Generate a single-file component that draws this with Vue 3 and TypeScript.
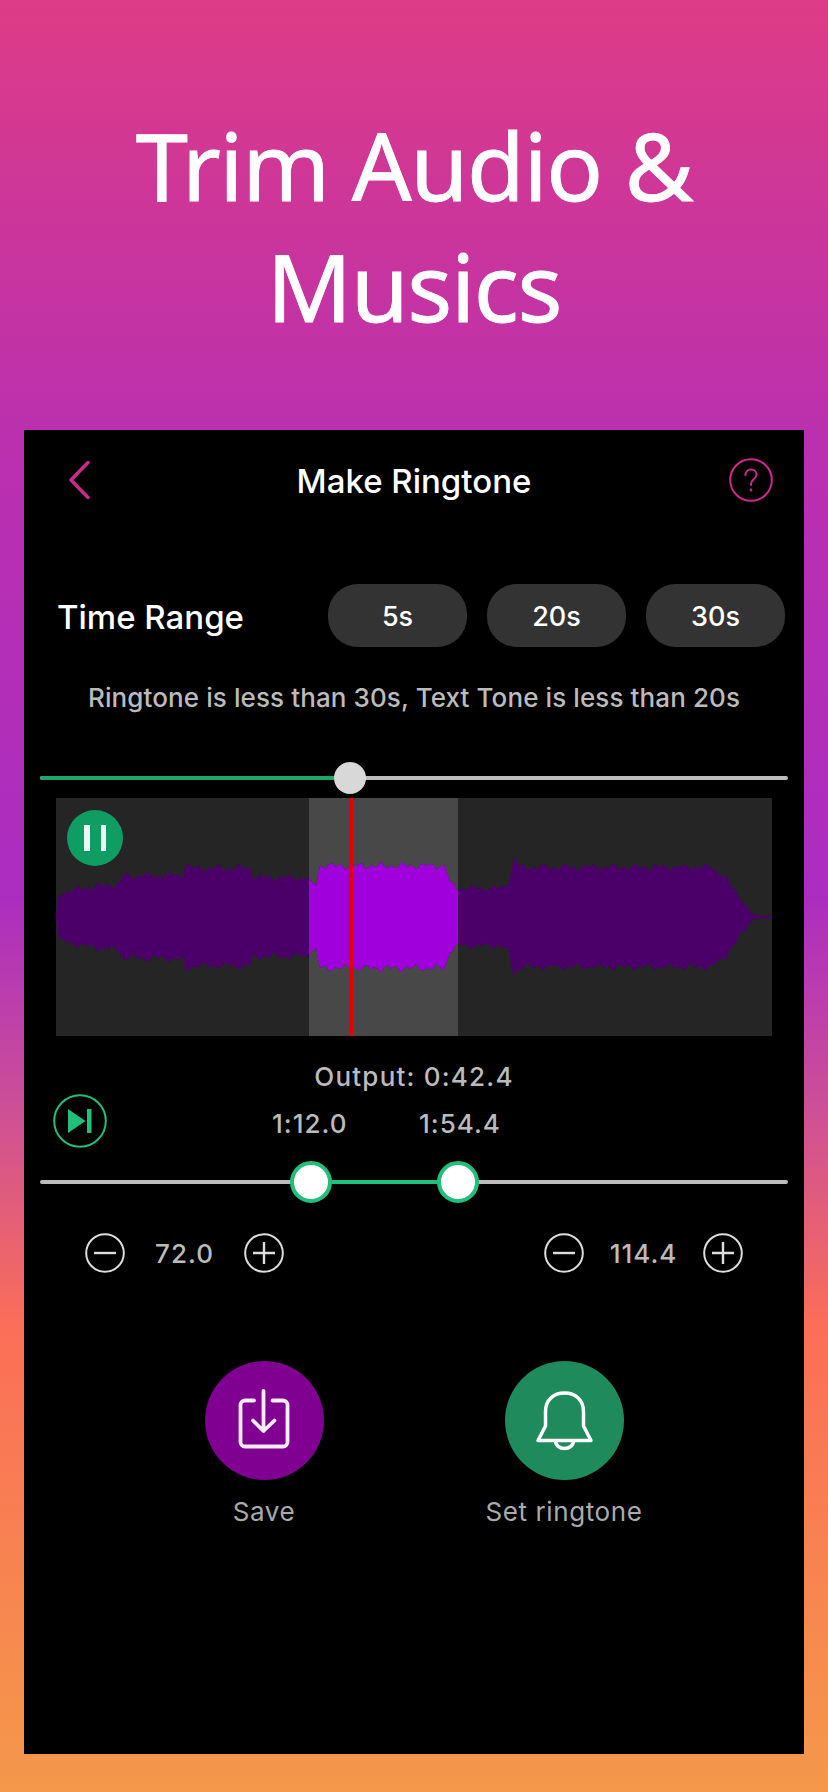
<script setup lang="ts">
const W = 716
const H = 238
const CY = 119
// envelope: [x in panel, half height]
const env: [number, number][] = [
  [0, 1], [3, 24], [40, 31], [64, 33], [66, 41], [127, 42], [130, 55], [134, 49], [194, 49], [198, 40],
  [253, 39], [254, 33], [260, 33], [264, 51], [389, 51], [394, 33], [402, 29], [445, 29], [451, 33],
  [457, 52], [459, 60], [463, 50], [655, 50], [668, 41], [697, 2], [716, 1],
]
function amp(x: number): number {
  for (let i = 1; i < env.length; i++) {
    const [x0, a0] = env[i - 1]
    const [x1, a1] = env[i]
    if (x <= x1) return a0 + ((a1 - a0) * (x - x0)) / (x1 - x0)
  }
  return 1
}
function tooth(x: number, seed: number): number {
  return Math.sin(x * 0.62 + seed) * 2 + Math.sin(x * 0.27 + seed * 2) * 1.8 + Math.sin(x * 1.31 + seed * 3) * 0.9
}
function wave(): string {
  const top: string[] = []
  const bottom: string[] = []
  for (let x = 0; x <= W; x += 2) {
    const a = amp(x)
    const s = Math.min(1, a / 25)
    top.push(`${x},${(CY - a - tooth(x, 1) * s).toFixed(1)}`)
    bottom.unshift(`${x},${(CY + a + tooth(x, 1.2) * s).toFixed(1)}`)
  }
  return 'M' + top.join(' L') + ' L' + bottom.join(' L') + ' Z'
}
const wavePath = wave()
const pills = ['5s', '20s', '30s']
</script>

<template>
  <div class="page">
    <h1 class="headline">Trim Audio &amp;<br />Musics</h1>
    <main class="panel">
      <header class="nav">
        <svg class="back" width="22" height="38" viewBox="0 0 22 38" fill="none">
          <path d="M20 1.5 3 19l17 17.5" stroke="#d0288c" stroke-width="3.4" stroke-linecap="round" stroke-linejoin="round" />
        </svg>
        <span class="nav-title">Make Ringtone</span>
        <svg class="help" width="44" height="44" viewBox="0 0 44 44" fill="none">
          <circle cx="22" cy="22" r="20.8" stroke="#d0288c" stroke-width="2" />
          <path d="M16.5 17.2c0-3.4 2.3-5.6 5.5-5.6s5.500 2 5.500 5c0 4.600-5.500 4.800-5.500 9.400v1" stroke="#d0288c" stroke-width="2" stroke-linecap="round" />
          <circle cx="22" cy="32" r="1.400" fill="#d0288c" />
        </svg>
      </header>

      <section class="range">
        <span class="range-label">Time Range</span>
        <div class="pills">
          <span v-for="p in pills" :key="p" class="pill">{{ p }}</span>
        </div>
      </section>

      <p class="hint">Ringtone is less than 30s, Text Tone is less than 20s</p>

      <div class="slider seek">
        <div class="track"></div>
        <div class="track-fill seek-fill"></div>
        <div class="seek-knob"></div>
      </div>

      <div class="wave">
        <div class="selection"></div>
        <svg class="wave-svg" :width="W" :height="H" :viewBox="`0 0 ${W} ${H}`">
          <defs>
            <clipPath id="sel"><rect x="253" y="0" width="149" :height="H" /></clipPath>
          </defs>
          <path :d="wavePath" fill="#4a0068" />
          <path :d="wavePath" fill="#a000dc" clip-path="url(#sel)" />
        </svg>
        <div class="playhead"></div>
        <div class="pause"><i></i><i></i></div>
      </div>

      <div class="output">Output: 0:42.4</div>

      <div class="times">
        <svg class="skip" width="54" height="54" viewBox="0 0 54 54" fill="none">
          <circle cx="27" cy="27" r="25.800" stroke="#1fbf7c" stroke-width="2" />
          <path d="M15 15v24l17.500-12z" fill="#1fbf7c" />
          <rect x="34" y="15" width="4.500" height="24" fill="#1fbf7c" />
        </svg>
        <span class="time t1">1:12.0</span>
        <span class="time t2">1:54.4</span>
      </div>

      <div class="slider trim">
        <div class="track"></div>
        <div class="track-fill trim-fill"></div>
        <div class="trim-knob k1"></div>
        <div class="trim-knob k2"></div>
      </div>

      <div class="steppers">
        <div class="stepper">
          <svg class="step-icon" width="40" height="40" viewBox="0 0 40 40" fill="none">
            <circle cx="20" cy="20" r="18.800" stroke="#ddd" stroke-width="2" /><path d="M9 20h22" stroke="#ddd" stroke-width="2.400" />
          </svg>
          <span class="step-val">72.0</span>
          <svg class="step-icon" width="40" height="40" viewBox="0 0 40 40" fill="none">
            <circle cx="20" cy="20" r="18.800" stroke="#ddd" stroke-width="2" /><path d="M9 20h22M20 9v22" stroke="#ddd" stroke-width="2.400" />
          </svg>
        </div>
        <div class="stepper">
          <svg class="step-icon" width="40" height="40" viewBox="0 0 40 40" fill="none">
            <circle cx="20" cy="20" r="18.800" stroke="#ddd" stroke-width="2" /><path d="M9 20h22" stroke="#ddd" stroke-width="2.400" />
          </svg>
          <span class="step-val">114.4</span>
          <svg class="step-icon" width="40" height="40" viewBox="0 0 40 40" fill="none">
            <circle cx="20" cy="20" r="18.800" stroke="#ddd" stroke-width="2" /><path d="M9 20h22M20 9v22" stroke="#ddd" stroke-width="2.400" />
          </svg>
        </div>
      </div>

      <div class="actions">
        <div class="action">
          <div class="round save">
            <svg width="119" height="119" viewBox="0 0 119 119" fill="none" stroke="#f8ecf8" stroke-width="3.800" stroke-linecap="round" stroke-linejoin="round">
              <path d="M49 39.500H40a4.500 4.500 0 0 0-4.500 4.500v37a4.500 4.500 0 0 0 4.500 4.500h38a4.500 4.500 0 0 0 4.500-4.500V44a4.500 4.500 0 0 0-4.500-4.500h-10.500" />
              <path d="M58.500 30v40M48 59.500 58.500 70 69.500 59.500" />
            </svg>
          </div>
          <span class="action-label">Save</span>
        </div>
        <div class="action">
          <div class="round bell">
            <svg width="119" height="119" viewBox="0 0 119 119" fill="none" stroke="#fff" stroke-width="3.500" stroke-linejoin="round">
              <path d="M33 79.500 40.500 65V50.500C40.500 39 48.500 32 59.500 32S78.500 39 78.500 50.500V65L86 79.500Z" />
              <path d="M50.500 80a9 7.500 0 0 0 18 0" />
            </svg>
          </div>
          <span class="action-label">Set ringtone</span>
        </div>
      </div>
    </main>
  </div>
</template>

<style>
html, body { margin: 0; padding: 0; }
</style>

<style scoped>
.page {
  width: 828px;
  height: 1792px;
  box-sizing: border-box;
  padding: 105px 24px 38px;
  display: flex;
  flex-direction: column;
  background: linear-gradient(180deg, #dd3c86 0%, #bb30ae 24%, #ab2dc0 50%, #cd5096 62%, #fb6e58 74%, #f4984a 100%);
  font-family: Inter, "Noto Sans", sans-serif;
  color: #fff;
  overflow: hidden;
}
.headline {
  margin: 0;
  height: 325px;
  font-family: "Noto Sans", sans-serif;
  font-weight: 400;
  font-size: 94px;
  letter-spacing: -1.4px;
  line-height: 121px;
  text-align: center;
  -webkit-text-stroke: 0.8px #fff;
}
.panel {
  flex: 1;
  background: #000;
  display: flex;
  flex-direction: column;
}
.nav {
  position: relative;
  height: 44px;
  margin-top: 28px;
  display: flex;
  align-items: center;
  justify-content: space-between;
  padding: 0 31px 0 44px;
}
.nav-title {
  font-size: 33px;
  font-weight: 500;
  position: absolute;
  left: 0;
  right: 0;
  top: 3px;
  text-align: center;
}
.range {
  margin-top: 82px;
  height: 63px;
  display: flex;
  align-items: center;
  justify-content: space-between;
  padding: 0 19px 0 33px;
}
.range-label { font-size: 33px; font-weight: 500; padding-top: 2px; }
.pills { display: flex; gap: 20px; }
.pill {
  width: 139px;
  height: 63px;
  padding-top: 2px;
  box-sizing: border-box;
  border-radius: 30px;
  background: #333;
  display: flex;
  align-items: center;
  justify-content: center;
  font-size: 27px;
  font-weight: 500;
}
.hint {
  margin: 33px 0 0;
  height: 36px;
  line-height: 36px;
  text-align: center;
  font-size: 26px;
  letter-spacing: 0.1px;
  font-weight: 500;
  color: #bbb;
}
.slider { position: relative; margin: 0 16px; height: 4px; }
.track, .track-fill { position: absolute; top: 0; bottom: 0; border-radius: 2px; }
.track { left: 0; right: 0; background: #bbb; }
.seek { margin-top: 60px; }
.seek-fill { left: 0; width: 310px; background: #1fa56c; }
.seek-knob {
  position: absolute;
  left: 294px;
  top: -14px;
  width: 32px;
  height: 32px;
  border-radius: 50%;
  background: #d8d8d8;
}
.wave {
  position: relative;
  margin: 18px 32px 0;
  height: 238px;
  background: #252525;
}
.selection {
  position: absolute;
  left: 253px;
  width: 149px;
  top: 0;
  bottom: 0;
  background: #484848;
}
.wave-svg { position: absolute; left: 0; top: 0; display: block; }
.playhead {
  position: absolute;
  left: 293px;
  width: 4px;
  top: 0;
  bottom: 0;
  background: #e60000;
}
.pause {
  position: absolute;
  left: 11px;
  top: 12px;
  width: 56px;
  height: 56px;
  border-radius: 50%;
  background: #0f9d63;
  display: flex;
  align-items: center;
  justify-content: center;
  gap: 11px;
}
.pause i { width: 5.500px; height: 26px; background: #eef8f2; }
.output {
  margin-top: 25px;
  height: 32px;
  line-height: 32px;
  text-align: center;
  font-size: 26px;
  letter-spacing: 1.2px;
  font-weight: 500;
  color: #bbb;
}
.times {
  position: relative;
  height: 54px;
  margin-top: 1px;
  padding-left: 29px;
  display: flex;
  align-items: center;
}
.skip { display: block; }
.time {
  position: absolute;
  top: 14px;
  font-size: 26px;
  letter-spacing: 1px;
  font-weight: 500;
  line-height: 32px;
  color: #bbb;
}
.t1 { left: 248px; }
.t2 { left: 395px; }
.trim { margin-top: 32px; }
.trim-fill { left: 271px; width: 147px; background: #1fbf7c; }
.trim-knob {
  position: absolute;
  top: -19px;
  width: 42px;
  height: 42px;
  box-sizing: border-box;
  border-radius: 50%;
  background: #fff;
  border: 4px solid #1fbf7c;
}
.k1 { left: 250px; }
.k2 { left: 397px; }
.steppers {
  margin-top: 49px;
  padding: 0 61px;
  display: flex;
  justify-content: space-between;
}
.stepper { display: flex; align-items: center; }
.step-icon { display: block; }
.step-val {
  width: 119px;
  text-align: center;
  font-size: 26px;
  letter-spacing: 1px;
  color: #bbb;
  font-weight: 500;
}
.actions {
  margin-top: 88px;
  display: flex;
  justify-content: center;
  gap: 180px;
}
.action { display: flex; flex-direction: column; align-items: center; width: 120px; }
.round {
  width: 119px;
  height: 119px;
  border-radius: 50%;
  display: flex;
  align-items: center;
  justify-content: center;
}
.round svg { display: block; }
.save { background: #7f0091; }
.bell { background: #1f8a5c; }
.action-label {
  margin-top: 16px;
  font-size: 26px;
  letter-spacing: 0.6px;
  line-height: 32px;
  color: #aaa;
  white-space: nowrap;
}
</style>
